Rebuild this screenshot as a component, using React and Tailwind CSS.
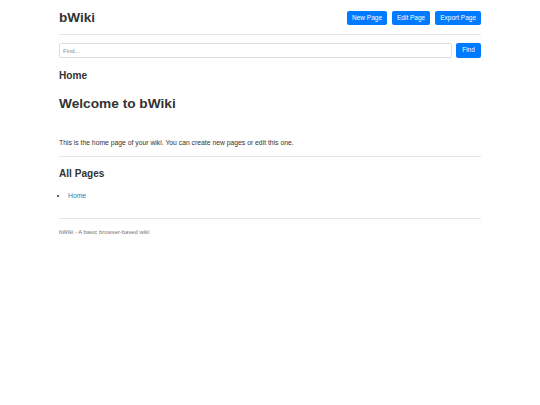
import React from 'react';

export default function App() {
  return (
    <div className="min-h-screen bg-white text-[#333] font-['Liberation_Sans',Arial,sans-serif]">
      <div className="w-[422px] mx-auto">
        {/* Header */}
        <header className="flex items-center justify-between pt-[9px] pb-[7px] border-b border-[#e5e5e5]">
          <h1 className="text-[13.6px] font-bold leading-[18px]">bWiki</h1>
          <div className="flex gap-[5px]">
            <button className="h-[14px] px-[5px] rounded-[2px] bg-[#007bff] text-white text-[6.5px] leading-none">New Page</button>
            <button className="h-[14px] px-[5px] rounded-[2px] bg-[#007bff] text-white text-[6.5px] leading-none">Edit Page</button>
            <button className="h-[14px] px-[5px] rounded-[2px] bg-[#007bff] text-white text-[6.5px] leading-none">Export Page</button>
          </div>
        </header>

        {/* Search */}
        <div className="flex gap-[4px] mt-[8px]">
          <input
            className="flex-1 h-[15px] border border-[#ddd] rounded-[2px] px-[3px] text-[6px] placeholder:text-[#888] outline-none"
            placeholder="Find..."
          />
          <button className="h-[15px] w-[25px] rounded-[2px] bg-[#007bff] text-white text-[6.4px] leading-none">Find</button>
        </div>

        {/* Content */}
        <main>
          <h2 className="text-[10.1px] font-bold mt-[11px] leading-[14px]">Home</h2>
          <h1 className="text-[13.7px] font-bold mt-[12px] leading-[18px]">Welcome to bWiki</h1>
          <p className="text-[6.8px] mt-[25px] leading-[10px]">
            This is the home page of your wiki. You can create new pages or edit this one.
          </p>
          <hr className="border-[#e5e5e5] mt-[8px]" />
          <h2 className="text-[10.1px] font-bold mt-[10px] leading-[14px]">All Pages</h2>
          <ul className="list-disc pl-[9px] mt-[10px] text-[6.8px] leading-[10px]">
            <li><a className="text-[#337ab7]" href="#">Home</a></li>
          </ul>
        </main>

        <footer className="mt-[17px] pt-[9px] border-t border-[#e5e5e5]">
          <p className="text-[5.9px] text-[#777]">bWiki - A basic browser-based wiki</p>
        </footer>
      </div>
    </div>
  );
}
